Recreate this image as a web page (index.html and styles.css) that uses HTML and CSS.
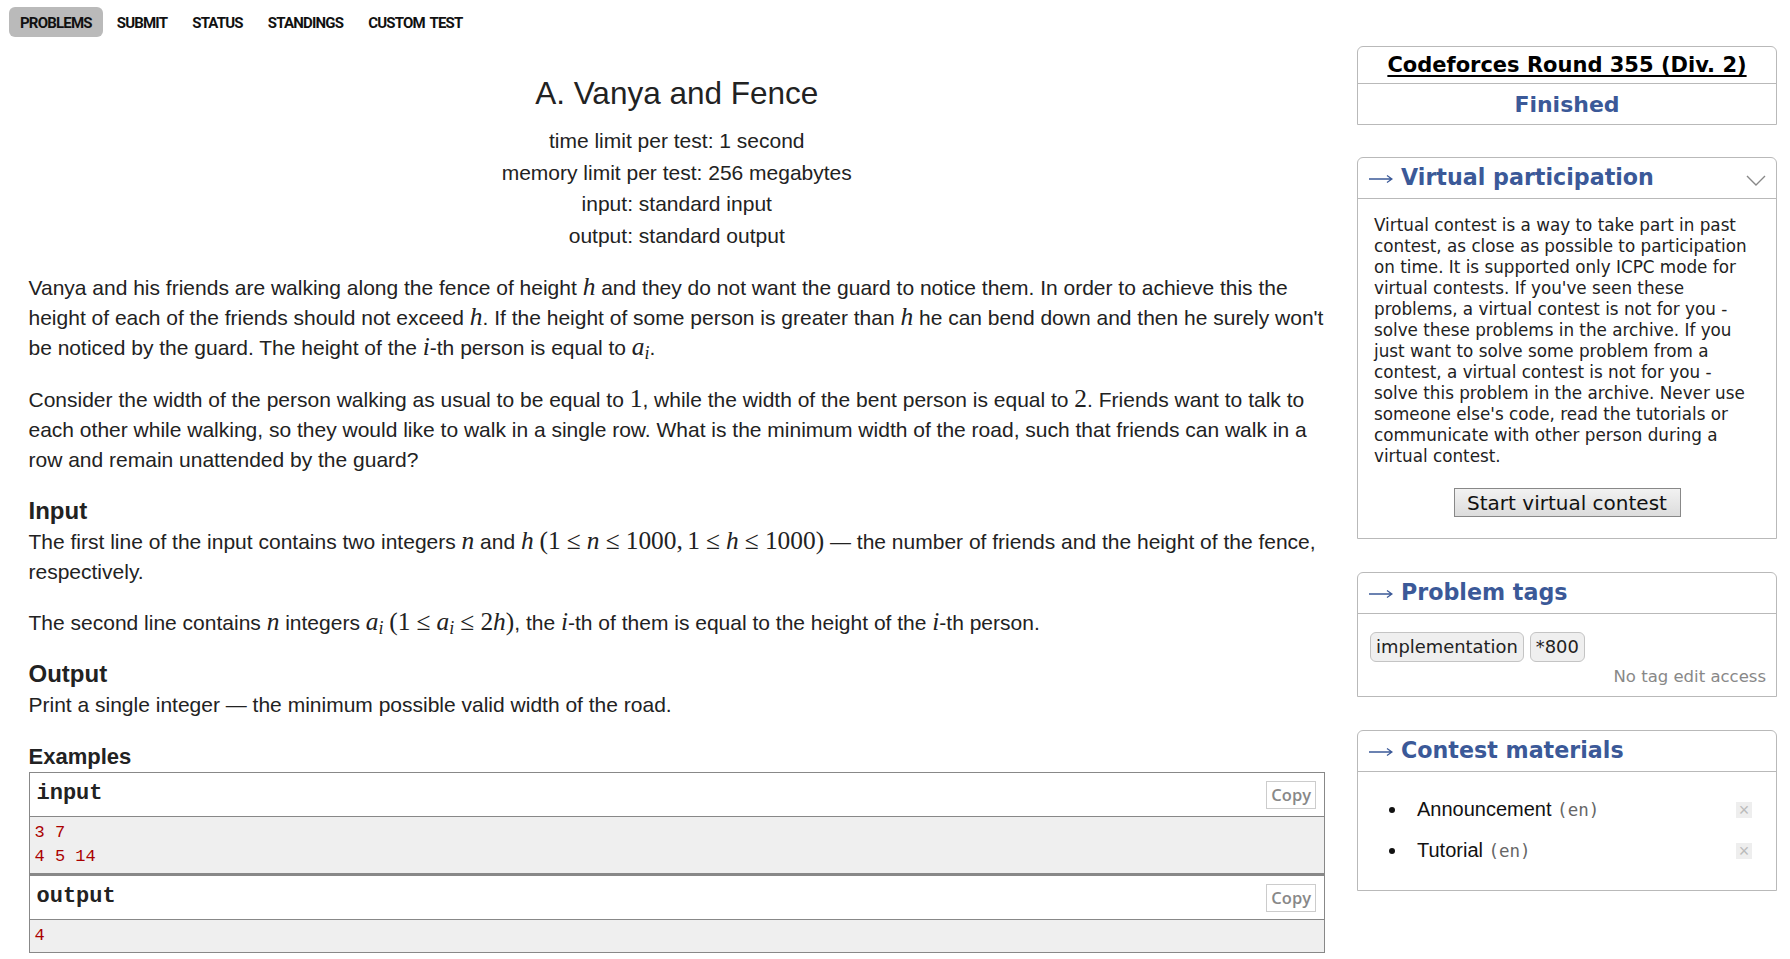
FILE: index.html
```html
<!DOCTYPE html>
<html>
<head>
<meta charset="utf-8">
<link rel="stylesheet" href="styles.css">
</head>
<body>
<div class="page">
  <div class="left">
    <nav class="tabs">
      <a class="tab active">PROBLEMS</a>
      <a class="tab">SUBMIT</a>
      <a class="tab">STATUS</a>
      <a class="tab">STANDINGS</a>
      <a class="tab">CUSTOM TEST</a>
    </nav>
    <div class="problem">
      <div class="header">
        <div class="title">A. Vanya and Fence</div>
        <div class="limit">time limit per test: 1 second</div>
        <div class="limit">memory limit per test: 256 megabytes</div>
        <div class="limit">input: standard input</div>
        <div class="limit">output: standard output</div>
      </div>
      <p>Vanya and his friends are walking along the fence of height <span class="m i">h</span> and they do not want the guard to notice them. In order to achieve this the height of each of the friends should not exceed <span class="m i">h</span>. If the height of some person is greater than <span class="m i">h</span> he can bend down and then he surely won't be noticed by the guard. The height of the <span class="m i">i</span>-th person is equal to <span class="m i">a</span><span class="m i sub">i</span>.</p>
      <p>Consider the width of the person walking as usual to be equal to <span class="m">1</span>, while the width of the bent person is equal to <span class="m">2</span>. Friends want to talk to each other while walking, so they would like to walk in a single row. What is the minimum width of the road, such that friends can walk in a row and remain unattended by the guard?</p>
      <div class="section-title">Input</div>
      <p>The first line of the input contains two integers <span class="m i">n</span> and <span class="m i">h</span> <span class="m">(1</span><span class="m rel">≤</span><span class="m i">n</span><span class="m rel">≤</span><span class="m comma">1000,</span><span class="m">1</span><span class="m rel">≤</span><span class="m i">h</span><span class="m rel">≤</span><span class="m">1000)</span> — the number of friends and the height of the fence, respectively.</p>
      <p>The second line contains <span class="m i">n</span> integers <span class="m i">a</span><span class="m i sub">i</span> <span class="m">(1</span><span class="m rel">≤</span><span class="m i">a</span><span class="m i sub">i</span><span class="m rel">≤</span><span class="m">2</span><span class="m i">h</span><span class="m">)</span>, the <span class="m i">i</span>-th of them is equal to the height of the <span class="m i">i</span>-th person.</p>
      <div class="section-title">Output</div>
      <p>Print a single integer — the minimum possible valid width of the road.</p>
      <div class="section-title small">Examples</div>
      <div class="sample">
        <div class="io">
          <div class="io-title"><span>input</span><span class="copy">Copy</span></div>
          <pre class="io-data">3 7
4 5 14</pre>
        </div>
        <div class="io">
          <div class="io-title"><span>output</span><span class="copy">Copy</span></div>
          <pre class="io-data">4</pre>
        </div>
      </div>
    </div>
  </div>
  <aside class="sidebar">
    <div class="box first">
      <div class="contest-name"><a>Codeforces Round 355 (Div. 2)</a></div>
      <div class="contest-state">Finished</div>
    </div>
    <div class="box">
      <div class="box-title"><svg class="arrow" width="24" height="10" viewBox="0 0 24 10"><path d="M0 5H22.5M18 1.5L23 5L18 8.5" fill="none" stroke="#3b5998" stroke-width="1.3"/></svg><span>Virtual participation</span>
        <svg class="chevron" width="20" height="11" viewBox="0 0 20 11"><polyline points="1,1 10,10 19,1" fill="none" stroke="#888" stroke-width="1.4"/></svg>
      </div>
      <div class="box-body vp">
        <div class="vp-text">Virtual contest is a way to take part in past contest, as close as possible to participation on time. It is supported only ICPC mode for virtual contests. If you've seen these problems, a virtual contest is not for you - solve these problems in the archive. If you just want to solve some problem from a contest, a virtual contest is not for you - solve this problem in the archive. Never use someone else's code, read the tutorials or communicate with other person during a virtual contest.</div>
        <div class="btn-row"><button class="btn">Start virtual contest</button></div>
      </div>
    </div>
    <div class="box">
      <div class="box-title"><svg class="arrow" width="24" height="10" viewBox="0 0 24 10"><path d="M0 5H22.5M18 1.5L23 5L18 8.5" fill="none" stroke="#3b5998" stroke-width="1.3"/></svg><span>Problem tags</span></div>
      <div class="box-body tags">
        <div class="tag-row"><span class="tag">implementation</span><span class="tag">*800</span></div>
        <div class="no-edit">No tag edit access</div>
      </div>
    </div>
    <div class="box">
      <div class="box-title"><svg class="arrow" width="24" height="10" viewBox="0 0 24 10"><path d="M0 5H22.5M18 1.5L23 5L18 8.5" fill="none" stroke="#3b5998" stroke-width="1.3"/></svg><span>Contest materials</span></div>
      <div class="box-body materials">
        <ul>
          <li><span class="mat">Announcement <span class="lang">(en)</span></span><span class="x">×</span></li>
          <li><span class="mat">Tutorial <span class="lang">(en)</span></span><span class="x">×</span></li>
        </ul>
      </div>
    </div>
  </aside>
</div>
</body>
</html>
```

FILE: styles.css
```css
* { box-sizing: border-box; }
html, body { margin: 0; padding: 0; background: #fff; }
body { font-family: "Liberation Sans", Arial, sans-serif; color: #222; }

.page {
  display: flex;
  padding: 7px 13px 0 9px;
  gap: 32px;
}
.left { flex: 1; min-width: 0; }

.tabs { display: flex; gap: 3px; height: 30px; }
.tab {
  display: flex; align-items: center;
  padding: 0 11px;
  height: 30px;
  border-radius: 6px;
  font-family: "Roboto", "Liberation Sans", sans-serif;
  font-weight: bold;
  font-size: 15px;
  letter-spacing: -0.8px;
  word-spacing: 2px;
  color: #111;
  padding-top: 1px;
}
.tab.active { background: #bababa; }

.problem { margin-left: 19.5px; font-size: 21px; line-height: 30.2px; }
.header { text-align: center; margin-top: 38px; margin-bottom: 22px; }
.title { font-size: 31.5px; line-height: 36px; margin-bottom: 14px; }
.limit { line-height: 31.5px; }

p { margin: 0 0 21px; }
.m { font-family: "Liberation Serif", "DejaVu Serif", serif; font-size: 1.21em; line-height: 0; }
.m.i { font-style: italic; }
.m.sub { font-size: 0.85em; position: relative; top: 0.2em; }
.m.rel { padding: 0 0.24em; }
.m.comma { padding-right: 0.17em; }

.section-title { font-weight: bold; font-size: 24px; line-height: 30.5px; }
.section-title.small { font-size: 22px; line-height: 31px; }

.io { border: 1px solid #888; }
.io + .io { border-top-width: 2px; }
.io-title {
  display: flex; justify-content: space-between; align-items: center;
  height: 44px;
  padding: 0 8px 0 7px;
  border-bottom: 1px solid #888;
  font-family: "Liberation Mono", "DejaVu Sans Mono", monospace;
  font-weight: bold;
  font-size: 22px;
}
.copy {
  font-family: "Open Sans", "DejaVu Sans", sans-serif;
  font-weight: 600;
  font-size: 16.5px;
  color: #888;
  border: 1px solid #ccc;
  padding: 0 4px;
  height: 28px;
  line-height: 26px;
}
.io-data {
  margin: 0;
  background: #efefef;
  color: #a00;
  font-family: "Liberation Mono", "DejaVu Sans Mono", monospace;
  font-size: 17px;
  line-height: 24px;
  padding: 4px 5px;
}

/* sidebar */
.sidebar { width: 420px; flex: none; padding-top: 39px; font-family: "DejaVu Sans", Verdana, sans-serif; }
.box {
  border: 1px solid #b9b9b9;
  border-radius: 6px 6px 0 0;
  margin-bottom: 33px;
}
.box.first { margin-bottom: 32px; }
.contest-name {
  height: 37px;
  border-bottom: 1px solid #b9b9b9;
  text-align: center;
  font-weight: bold;
  font-size: 21px;
  line-height: 36px;
}
.contest-name a { color: #000; text-decoration: underline; text-underline-offset: 3px; }
.contest-state {
  height: 40px;
  text-align: center;
  font-weight: bold;
  font-size: 22px;
  line-height: 41px;
  color: #3b5998;
}
.box-title {
  position: relative;
  display: flex; align-items: center;
  height: 41px;
  border-bottom: 1px solid #b9b9b9;
  padding-left: 11px;
  padding-bottom: 2px;
  font-weight: bold;
  font-size: 22.2px;
  color: #3b5998;
}
.arrow { flex: none; margin-right: 8px; margin-top: 4px; }
.chevron { position: absolute; right: 10px; top: 17px; }
.box-body { padding: 16px 16px 0 16px; }
.vp-text { font-size: 16.8px; line-height: 21px; color: #222; }
.btn-row { text-align: center; padding: 21px 0 21px; }
.btn {
  font-family: "DejaVu Sans", Verdana, sans-serif;
  font-size: 20px;
  height: 29px;
  width: 227px;
  padding: 0;
  border: 1px solid #888;
  background: linear-gradient(#f2f2f2, #dcdcdc);
  color: #111;
}
.tags { padding: 18px 10px 8px 12px; }
.tag-row { display: flex; gap: 6px; }
.tag {
  display: inline-block;
  height: 30px;
  line-height: 28px;
  padding: 0 5px;
  border: 1px solid #c4c4c4;
  border-radius: 6px;
  background: #efefef;
  font-size: 17.9px;
  color: #222;
}
.no-edit { text-align: right; font-size: 16.5px; color: #888; margin-top: 4px; line-height: 22px; }
.materials { padding: 17px 24px 19px 16px; }
.materials ul { margin: 0; padding: 0; list-style: none; font-family: "Liberation Sans", Arial, sans-serif; font-size: 20px; color: #111; }
.materials li { display: flex; align-items: center; height: 41px; }
.materials li::before {
  content: "";
  flex: none;
  width: 6px; height: 6px; border-radius: 50%;
  background: #111;
  margin: 0 22px 0 15px;
}
.mat { flex: 1; }
.lang { font-family: "DejaVu Sans Mono", "Liberation Mono", monospace; color: #666; font-size: 17.5px; }
.x {
  flex: none;
  width: 16px; height: 16px;
  background: #eee; color: #bbb;
  font-size: 18px; line-height: 16px; text-align: center;
}
```
